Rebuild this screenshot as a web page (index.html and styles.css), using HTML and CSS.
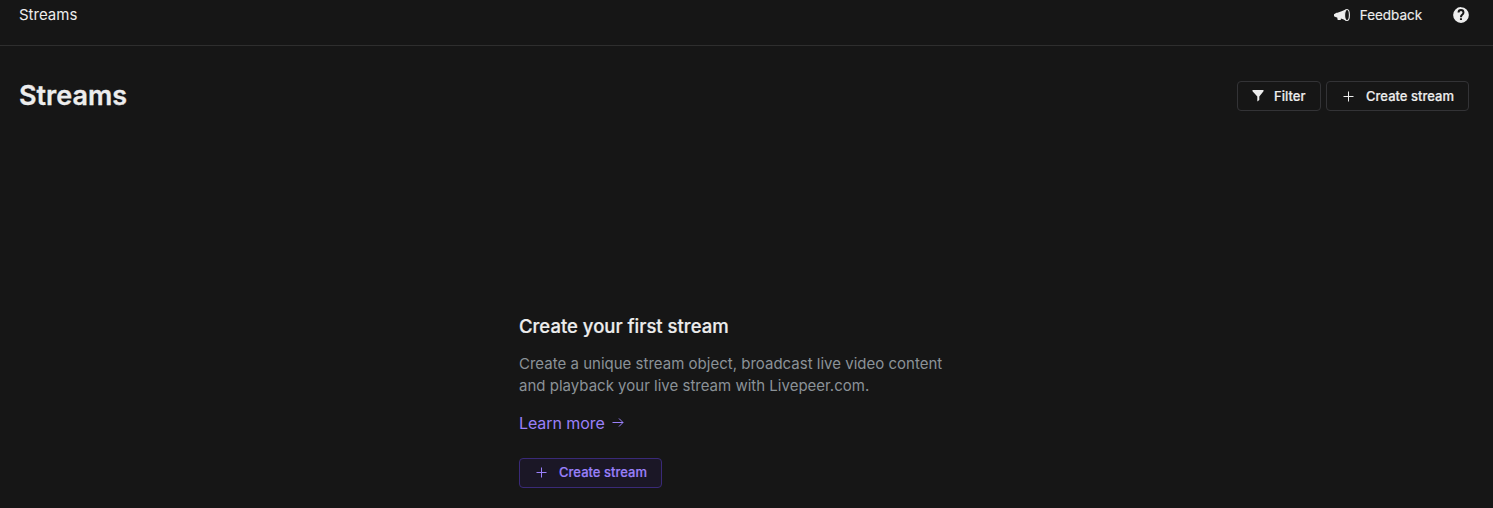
FILE: index.html
```
<!DOCTYPE html>
<html lang="en">
<head>
<meta charset="utf-8">
<title>Streams</title>
<link rel="stylesheet" href="styles.css">
</head>
<body>
<header class="topbar">
  <span class="crumb">Streams</span>
  <nav class="links">
    <a class="feedback"><svg width="18" height="14" viewBox="0 0 18 14"><path fill="currentColor" d="M13.500 1C10 2.800 7 4 4.500 4.800H3.500L1 6.200V8.200L3 9.200L4.200 9.500L4.700 12H7.700L7.900 10.600C10 11 11.500 12 13.500 13Z"/><ellipse cx="14" cy="7" rx="2.400" ry="5.500" fill="#161616" stroke="currentColor" stroke-width="1.100"/></svg><span>Feedback</span></a>
    <svg class="help" width="18" height="18" viewBox="0 0 24 24"><path fill="currentColor" d="M12 1.500a10.500 10.500 0 1 0 0 21 10.500 10.500 0 0 0 0-21zm1.300 17.300h-2.700v-2.600h2.700zm2.400-7.600-1.100 1.100c-.9.900-1.300 1.500-1.300 2.700h-2.600v-.7c0-1.200.5-2.100 1.300-2.900l1.400-1.400c.4-.4.600-.8.600-1.300a2 2 0 0 0-4 0H7.400a4.600 4.600 0 0 1 9.200 0c0 1-.4 1.900-.9 2.500z"/></svg>
  </nav>
</header>
<main class="content">
  <div class="heading">
    <h1 class="title">Streams</h1>
    <div class="actions">
      <button class="btn btn-filter"><svg width="12" height="12" viewBox="0 0 12 12"><path fill="currentColor" d="M.5 0h11v1.300L7.300 6.500V10L5.300 11.600V6.500L.5 1.300z"/></svg><span>Filter</span></button>
      <button class="btn"><svg width="11" height="11" viewBox="0 0 11 11"><path stroke="currentColor" d="M.5 5.500h10M5.500.5v10"/></svg><span>Create stream</span></button>
    </div>
  </div>
  <section class="empty">
    <h2 class="subtitle">Create your first stream</h2>
    <p class="copy">Create a unique stream object, broadcast live video content<br>and playback your live stream with Livepeer.com.</p>
    <a class="learn"><span>Learn more</span><svg width="12" height="10" viewBox="0 0 12 10"><path fill="none" stroke="currentColor" d="M.5 4.500h10.500M7 .5l4 4-4 4"/></svg></a>
    <button class="btn btn-primary"><svg width="11" height="11" viewBox="0 0 11 11"><path stroke="currentColor" d="M.5 5.500h10M5.500.5v10"/></svg><span>Create stream</span></button>
  </section>
</main>
</body>
</html>
```
FILE: styles.css
```
* { box-sizing: border-box; }
body {
  margin: 0;
  height: 508px;
  overflow: hidden;
  background: #161616;
  color: #ededed;
  font-family: Inter, sans-serif;
}
svg { display: block; flex: none; }
.topbar {
  display: flex;
  justify-content: space-between;
  align-items: flex-start;
  height: 46px;
  padding: 5px 23px 0 19px;
  border-bottom: 1px solid #2e2e2e;
}
.crumb { font-size: 15px; line-height: 20px; }
.links { display: flex; align-items: center; gap: 30px; height: 20px; }
.feedback { display: flex; align-items: center; gap: 9px; font-size: 13.5px; line-height: 20px; letter-spacing: -0.05px; }
.feedback span { -webkit-text-stroke: 0.15px currentColor; }
.heading {
  display: flex;
  justify-content: space-between;
  align-items: flex-start;
  padding: 31px 24px 0 19px;
  height: 269px;
}
.title { margin: 0; font-size: 27px; line-height: 37px; font-weight: 600; -webkit-text-stroke: 0.3px currentColor; }
.actions { display: flex; gap: 5px; padding-top: 4px; }
.btn {
  display: flex;
  align-items: center;
  gap: 12px;
  width: 143px;
  height: 30px;
  padding: 0 0 0 16px;
  border: 1px solid #333336;
  border-radius: 4px;
  background: transparent;
  color: #ededed;
  font: 500 13px/20px Inter, sans-serif;
  letter-spacing: 0.02px;
  white-space: nowrap;
  -webkit-text-stroke: 0.2px currentColor;
}
.btn-filter { width: 84px; padding-left: 14px; gap: 10px; }
.empty { margin-left: 519px; }
.subtitle { margin: 0; font-size: 18.5px; line-height: 22px; font-weight: 500; -webkit-text-stroke: 0.2px currentColor; }
.copy { margin: 16px 0 0; color: #8b9298; font-size: 15px; line-height: 22px; letter-spacing: 0.01px; }
.learn { display: flex; align-items: center; gap: 7px; margin-top: 16px; color: #9a80fa; font-size: 16px; line-height: 20px; letter-spacing: -0.08px; }
.btn-primary { margin-top: 25px; padding-bottom: 2px; background: #1b1726; border-color: #3a2a78; color: #9a80fa; }
```
